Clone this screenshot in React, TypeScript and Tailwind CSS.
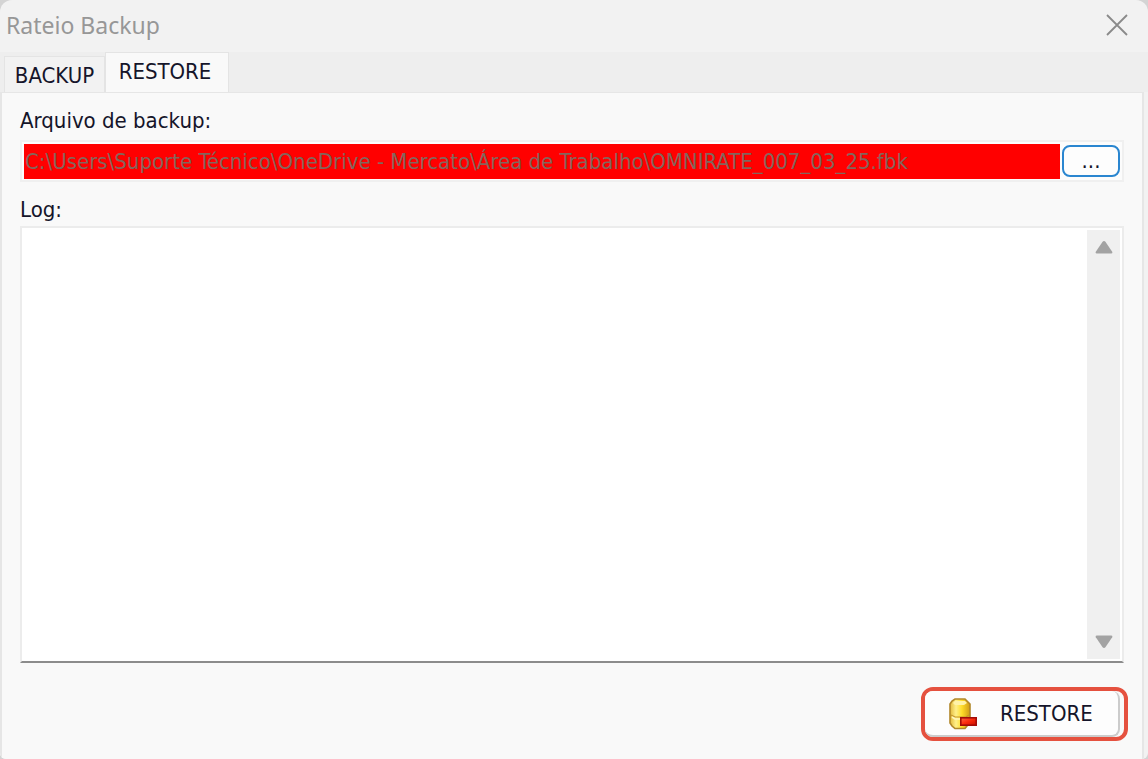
import { FC, useCallback, useState } from 'react';

const CloseIcon: FC<object> = () => (
  <svg width="22" height="22" viewBox="0 0 22 22" fill="none" stroke="#8a8a8a" strokeWidth="1.8" aria-hidden="true">
    <path d="M1 1L21 21M21 1L1 21" />
  </svg>
);

const ArrowIcon: FC<{ down?: boolean }> = ({ down }) => (
  <svg width="18" height="14" viewBox="0 0 18 14" fill="#a3a3a3" aria-hidden="true">
    {down ? (
      <path d="M1.6 0.5H16.4Q18 0.8 17.2 2.2L10.6 12Q9 14 7.4 12L0.8 2.2Q0 0.8 1.6 0.5Z" />
    ) : (
      <path d="M1.6 13.5H16.4Q18 13.2 17.2 11.8L10.6 2Q9 0 7.4 2L0.8 11.8Q0 13.2 1.6 13.5Z" />
    )}
  </svg>
);

const DatabaseIcon: FC<object> = () => (
  <svg width="28" height="32" viewBox="0 0 28 32" aria-hidden="true">
    <defs>
      <linearGradient id="gold" x1="0" x2="1" y1="0" y2="0">
        <stop offset="0" stopColor="#e3b93c" />
        <stop offset="0.3" stopColor="#fff08a" />
        <stop offset="0.6" stopColor="#ffdc28" />
        <stop offset="1" stopColor="#cf9a16" />
      </linearGradient>
      <linearGradient id="red" x1="0" x2="1" y1="0" y2="1">
        <stop offset="0" stopColor="#ff6a45" />
        <stop offset="0.5" stopColor="#fa2a0c" />
        <stop offset="1" stopColor="#c80d00" />
      </linearGradient>
    </defs>
    <path
      d="M6 1H16L18 3L21 6V25L18 28L16 30.5H6L3 28L1 25V6L3 3Z"
      fill="url(#gold)"
      stroke="#b1872a"
      strokeWidth="1.6"
    />
    <path d="M6 3H16L18 5L15 7H6L4 5Z" fill="#fff2a8" />
    <path d="M2 17L6 19H17L20 17" fill="none" stroke="#c5962b" strokeWidth="1.2" />
    <path d="M3 19L6 21H12" fill="none" stroke="#fff6bd" strokeWidth="1.6" />
    <rect x="11.8" y="19.8" width="15.4" height="7.4" fill="url(#red)" stroke="#a30c08" strokeWidth="1.6" />
  </svg>
);

const App: FC<object> = () => {
  const [tab, setTab] = useState<string>('restore');
  const [log, setLog] = useState<string>('');
  const [file, setFile] = useState<string>(
    'C:\\Users\\Suporte Técnico\\OneDrive - Mercato\\Área de Trabalho\\OMNIRATE_007_03_25.fbk',
  );

  const openBackup = useCallback(() => setTab('backup'), []);
  const openRestore = useCallback(() => setTab('restore'), []);

  return (
    <div className="bg-[#d4d4d4]">
      <div className="flex min-h-screen flex-col overflow-hidden rounded-t-xl rounded-b-md bg-[#f2f2f2] font-['DejaVu_Sans_Condensed','DejaVu_Sans',sans-serif] text-[22px] leading-7 text-[#15152a]">
        <header className="flex h-[52px] items-center justify-between pr-5 pb-[2px] pl-[6px]">
          <h1 className="font-['Noto_Sans',sans-serif] text-[23px] text-[#979797]">Rateio Backup</h1>
          <button type="button" aria-label="Fechar">
            <CloseIcon />
          </button>
        </header>

        <div role="tablist" className="flex h-10 items-end bg-[#eeeeee] pl-1">
          <button
            type="button"
            role="tab"
            aria-selected={tab === 'backup'}
            onClick={openBackup}
            className="h-9 w-[101px] border border-b-0 border-[#e4e4e4] bg-[#f2f2f2] pt-[2px]"
          >
            BACKUP
          </button>
          <button
            type="button"
            role="tab"
            aria-selected={tab === 'restore'}
            onClick={openRestore}
            className="-mb-px h-[41px] w-[124px] border border-b-0 border-[#e4e4e4] bg-[#f9f9f9] pr-1 pb-[2px]"
          >
            RESTORE
          </button>
        </div>

        <main className="mr-1 flex flex-1 flex-col border-x-2 border-t border-[#e6e6e6] bg-[#f9f9f9] px-[18px] pt-[14px] pb-[18px]">
          <label htmlFor="file">Arquivo de backup:</label>
          <div className="mt-[5px] flex h-[42px] items-center gap-[2px] border-2 border-[#f0f0f0] bg-[#fcfcfc] px-[2px]">
            <input
              id="file"
              type="text"
              value={file}
              onChange={(event) => setFile(event.target.value)}
              className="h-[35px] min-w-0 flex-1 bg-[#ff0000] px-px text-[#84655c] outline-none"
            />
            <button
              type="button"
              className="h-8 w-[58px] rounded-lg border-2 border-[#2a86d0] bg-[#fdfdfd] leading-7"
            >
              ...
            </button>
          </div>

          <label htmlFor="log" className="mt-[14px]">
            Log:
          </label>
          <div className="mt-[2px] flex min-h-40 flex-1 border-2 border-b-[#8c8c8c] border-[#ececec] bg-white">
            <textarea
              id="log"
              value={log}
              onChange={(event) => setLog(event.target.value)}
              className="min-w-0 flex-1 resize-none outline-none"
            />
            <div className="my-[2px] mr-[2px] flex w-[33px] flex-col items-center justify-between bg-[#f0f0f0] py-[10px]">
              <button type="button" aria-label="Rolar para cima">
                <ArrowIcon />
              </button>
              <button type="button" aria-label="Rolar para baixo">
                <ArrowIcon down />
              </button>
            </div>
          </div>

          <div className="-mr-1 mt-6 self-end rounded-xl border-4 border-[#e5513f] pr-1">
            <button
              type="button"
              className="flex h-[46px] w-[195px] items-center gap-[23px] rounded-lg border-r-2 border-b-2 border-[#cccccc] bg-[#fdfdfd] pt-[2px] pl-6"
            >
              <DatabaseIcon />
              RESTORE
            </button>
          </div>
        </main>
      </div>
    </div>
  );
};

export default App;
